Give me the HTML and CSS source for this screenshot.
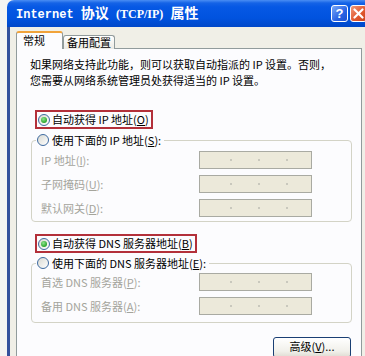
FILE: index.html
```html
<!DOCTYPE html>
<html lang="zh-CN">
<head>
<meta charset="utf-8">
<title>Internet 协议 (TCP/IP) 属性</title>
<link rel="stylesheet" href="styles.css">
</head>
<body>
<div class="window">
  <div class="titlebar">
    <div class="title"><span class="lat">Internet</span> <span class="cjk">协议</span> <span class="ser">(TCP/IP)</span> <span class="cjk">属性</span></div>
    <div class="ctrls">
      <span class="cbtn help">?</span>
      <span class="cbtn close">
        <svg width="11" height="11" viewBox="0 0 11 11"><path d="M1.5 1.5 L9.5 9.5 M9.5 1.5 L1.5 9.5" stroke="#fff" stroke-width="2.2" stroke-linecap="round"/></svg>
      </span>
    </div>
  </div>
  <div class="frame">
    <div class="tabs">
      <div class="tab active">常规</div>
      <div class="tab">备用配置</div>
    </div>
    <div class="panel">
      <div class="desc">
        <div class="dline">如果网络支持此功能，则可以获取自动指派的 IP 设置。否则，</div>
        <div class="dline">您需要从网络系统管理员处获得适当的 IP 设置。</div>
      </div>

      <div class="pick">
        <span class="radio on"><span class="dot"></span></span>
        <span>自动获得 IP 地址(<u>O</u>)</span>
      </div>

      <div class="group">
        <div class="legend">
          <span class="radio"></span>
          <span>使用下面的 IP 地址(<u>S</u>):</span>
        </div>
        <div class="rows">
          <div class="row"><span class="lbl">IP 地址(<u>I</u>):</span><span class="field"><i></i><i></i><i></i></span></div>
          <div class="row"><span class="lbl">子网掩码(<u>U</u>):</span><span class="field"><i></i><i></i><i></i></span></div>
          <div class="row"><span class="lbl">默认网关(<u>D</u>):</span><span class="field"><i></i><i></i><i></i></span></div>
        </div>
      </div>

      <div class="pick pick2">
        <span class="radio on"><span class="dot"></span></span>
        <span>自动获得 DNS 服务器地址(<u>B</u>)</span>
      </div>

      <div class="group group2">
        <div class="legend">
          <span class="radio"></span>
          <span>使用下面的 DNS 服务器地址(<u>E</u>):</span>
        </div>
        <div class="rows rows2">
          <div class="row"><span class="lbl">首选 DNS 服务器(<u>P</u>):</span><span class="field"><i></i><i></i><i></i></span></div>
          <div class="row"><span class="lbl">备用 DNS 服务器(<u>A</u>):</span><span class="field"><i></i><i></i><i></i></span></div>
        </div>
      </div>

      <div class="actions">
        <button class="btn" type="button">高级(<u>V</u>)...</button>
      </div>
    </div>
  </div>
</div>
</body>
</html>
```
FILE: styles.css
```css
* { box-sizing: border-box; }
html, body { margin: 0; padding: 0; }
body {
  width: 365px;
  height: 356px;
  overflow: hidden;
  background: #f4f4f2;
  font-family: "Noto Sans CJK SC", "Liberation Sans", sans-serif;
  font-size: 11px;
  color: #000;
}

.window {
  margin-left: 7px;
  width: 370px;
}

.titlebar {
  height: 27px;
  display: flex;
  align-items: center;
  padding: 0 10px 0 9px;
  border-top-left-radius: 7px;
  background: linear-gradient(#4a8ef4 0, #1563e6 3px, #0658e4 7px, #0153df 18px, #0047c8 27px);
  color: #fff;
}
.title {
  font-weight: bold;
  white-space: nowrap;
  line-height: 16px;
  font-family: "Liberation Mono", monospace;
  font-size: 12px;
}
.title .lat {
  font-family: "Liberation Mono", monospace;
  font-size: 12px;
}
.title .ser {
  font-family: "Liberation Serif", serif;
  font-size: 12px;
}
.title .cjk {
  font-family: "Noto Sans CJK SC", sans-serif;
  font-size: 14px;
}

.ctrls {
  margin-left: auto;
  display: flex;
  gap: 2px;
}
.cbtn {
  width: 17px;
  height: 17px;
  border: 1px solid #fff;
  border-radius: 3px;
  display: flex;
  align-items: center;
  justify-content: center;
  color: #fff;
  font-family: "Liberation Sans", sans-serif;
  font-weight: bold;
  font-size: 13px;
  line-height: 1;
}
.help { background: linear-gradient(135deg, #7aaaf8, #2a63e4 60%, #1d4fd0); }
.close { background: linear-gradient(135deg, #f09a7c, #e2592f 55%, #c8401b); }

.frame {
  height: 329px;
  border-left: 3px solid #34519c;
  background: #f0efe7;
  padding: 4px 0 0 6px;
}

.tabs {
  display: flex;
  align-items: flex-end;
  height: 18px;
  margin-bottom: -1px;
  position: relative;
  z-index: 1;
}
.tab {
  height: 14px;
  padding: 0 3px;
  border: 1px solid #919b9c;
  border-bottom: none;
  border-radius: 3px 3px 0 0;
  background: linear-gradient(#fff, #ecebe4);
  line-height: 12px;
}
.tab.active {
  width: 47px;
  height: 18px;
  padding-left: 6px;
  border-top: 2px solid #f1a33a;
  background: #fcfcfe;
  line-height: 15px;
}

.panel {
  width: 346px;
  height: 320px;
  border: 1px solid #919b9c;
  background: #fcfcfe;
  padding: 7px 0 0 13px;
}

.desc {
  display: flex;
  flex-direction: column;
}
.dline {
  height: 16px;
  line-height: 16px;
  white-space: nowrap;
}

.pick {
  display: flex;
  align-items: center;
  gap: 2px;
  width: fit-content;
  height: 19px;
  margin: 22px 0 0 5px;
  padding: 0 2px 0 1px;
  border: 2px solid #b3303a;
  line-height: 13px;
}
.pick2 { margin-top: 12px; }

.radio {
  width: 12px;
  height: 12px;
  flex: none;
  border-radius: 50%;
  border: 1px solid #3e6aa0;
  background: linear-gradient(135deg, #d9d9d2, #fff);
  display: flex;
  align-items: center;
  justify-content: center;
}
.dot {
  width: 6px;
  height: 6px;
  border-radius: 50%;
  background: radial-gradient(circle at 40% 35%, #8fe38f, #2aa52a 70%);
}

.group {
  width: 321px;
  margin: 11px 0 0 1px;
  padding: 0 0 4px 9px;
  border: 1px solid #d3d3c6;
  border-radius: 4px;
}
.group2 {
  margin-top: 10px;
  padding-bottom: 7px;
}
.legend {
  display: flex;
  align-items: center;
  gap: 3px;
  width: fit-content;
  height: 16px;
  margin: -9px 0 0 -5px;
  padding: 0 3px 0 1px;
  background: #fcfcfe;
  line-height: 13px;
}

.rows {
  display: flex;
  flex-direction: column;
  gap: 6px;
  margin-top: 3px;
}
.rows2 { margin-top: 2px; }
.row {
  display: grid;
  grid-template-columns: 158px 113px;
  align-items: center;
  height: 18px;
}
.lbl {
  color: #a4a49c;
  line-height: 13px;
}
.field {
  height: 18px;
  border: 1px solid #a9aaa2;
  background: #ece9da;
  display: flex;
  align-items: center;
  gap: 26px;
  padding-left: 30px;
}
.field i {
  width: 2px;
  height: 2px;
  background: #c9c8bd;
}

.actions {
  display: flex;
  justify-content: flex-end;
  padding-right: 10px;
  margin-top: 14px;
}
.btn {
  width: 78px;
  height: 21px;
  border: 1px solid #1a3f74;
  border-radius: 3px;
  background: linear-gradient(#fff, #f1f0ea 70%, #dedcd2);
  font-family: "Noto Sans CJK SC", "Liberation Sans", sans-serif;
  font-size: 11px;
  color: #000;
  padding: 0 0 3px;
  line-height: 13px;
}
```
